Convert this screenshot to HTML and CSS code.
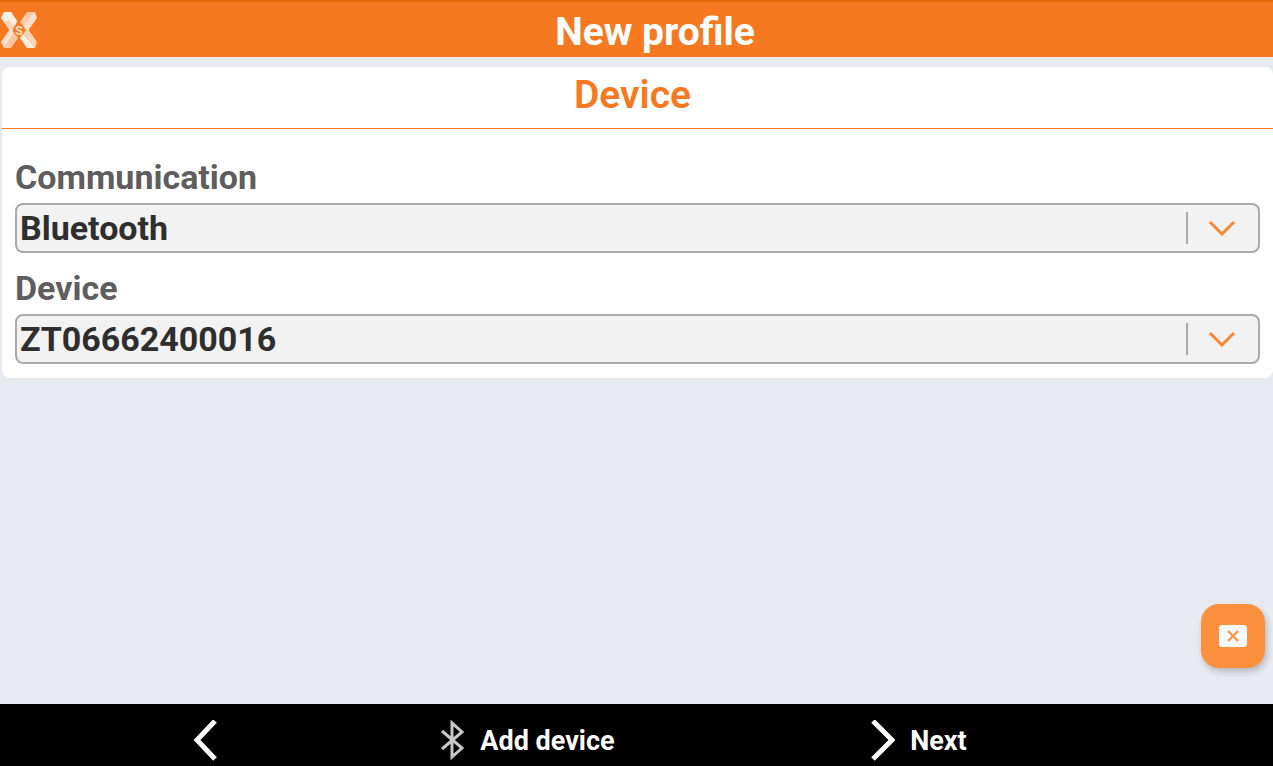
FILE: index.html
```html
<!DOCTYPE html>
<html lang="en">
<head>
<meta charset="utf-8">
<meta name="viewport" content="width=device-width, initial-scale=1">
<title>New profile</title>
<link rel="stylesheet" href="styles.css">
</head>
<body>
<header class="topbar">
  <svg class="logo" viewBox="0 0 36 36" aria-hidden="true">
    <path fill="#fcd5b9" d="M3 0h7l6 9-3 10H9L0 6z"/>
    <path fill="#fff0e3" d="M3 0h7l6 9-3 6z"/>
    <path fill="#fff0e3" d="M3 0L0 6l3 4 5-2z"/>
    <path fill="#fbc8a3" d="M26 0h8L23 16l-4-6z"/>
    <path fill="#fde0cb" d="M34 0l2 6-9 13-6-4z"/>
    <path fill="#fde0cb" d="M9 17l5 4L3 36l-3-6z"/>
    <path fill="#fbc8a3" d="M13 20l4 6-7 10H3z"/>
    <path fill="#fff0e3" d="M22 21l12 15h-8l-7-10z"/>
    <path fill="#fcd5b9" d="M27 17l9 13-2 6-12-15z"/>
    <circle cx="18" cy="18" r="6" fill="#f67921"/>
    <text class="logo-letter" x="18" y="23" text-anchor="middle">S</text>
  </svg>
  <h1 class="title">New profile</h1>
</header>
<main class="content">
  <section class="card">
    <h2 class="card-title">Device</h2>
    <form class="fields">
      <label class="label" for="communication">Communication</label>
      <div class="picker">
        <select class="select" id="communication"><option>Bluetooth</option></select>
        <span class="divider"></span>
        <svg class="chevron" viewBox="0 0 28 16" aria-hidden="true"><path d="M2 2l12 12L26 2"/></svg>
      </div>
      <label class="label" for="device">Device</label>
      <div class="picker">
        <select class="select" id="device"><option>ZT06662400016</option></select>
        <span class="divider"></span>
        <svg class="chevron" viewBox="0 0 28 16" aria-hidden="true"><path d="M2 2l12 12L26 2"/></svg>
      </div>
    </form>
  </section>
  <button class="float" type="button" aria-label="Close">
    <svg width="28" height="24" viewBox="0 0 28 24" aria-hidden="true">
      <rect y="1" width="28" height="22" rx="3" fill="#f7f9fb"/>
      <path d="M9 7l10 10M19 7L9 17" stroke="#fd903c" stroke-width="2" fill="none"/>
    </svg>
  </button>
</main>
<nav class="actions">
  <button class="action" type="button" aria-label="Back">
    <svg width="24" height="42" viewBox="0 0 24 42" aria-hidden="true"><path class="arrow" d="M22 1L4 20l18 19"/></svg>
  </button>
  <button class="action" type="button">
    <svg width="24" height="42" viewBox="0 0 24 42" aria-hidden="true"><path class="bluetooth" d="M1 11l20 17-10 9V3l10 9L1 29"/></svg>
    Add device
  </button>
  <button class="action" type="button">
    <svg width="24" height="42" viewBox="0 0 24 42" aria-hidden="true"><path class="arrow" d="M2 1l19 19L2 39"/></svg>
    Next
  </button>
</nav>
</body>
</html>
```
FILE: styles.css
```css
* { box-sizing: border-box; }
body {
  display: flex;
  flex-direction: column;
  min-height: 100vh;
  margin: 0;
  background: #e7eaef;
  font-family: Roboto, "Liberation Sans", sans-serif;
}
.topbar {
  display: flex;
  align-items: center;
  border-top: 2px solid #e9650a;
  background: #f67921;
  color: #fff;
}
.logo { width: 36px; height: 36px; margin-left: 1px; }
.logo-letter { font: 700 13px Roboto, sans-serif; fill: #fddcc4; }
.title {
  flex: 1;
  margin: 0;
  padding-top: 5px;
  font-size: 39px;
  font-weight: 700;
  line-height: 50px;
  text-align: center;
}
.content {
  display: flex;
  flex: 1;
  flex-direction: column;
  justify-content: space-between;
  padding: 10px 0 36px 2px;
}
.card { border-radius: 8px; background: #fff; }
.card-title {
  margin: 0;
  padding: 0 10px 5px 0;
  border-bottom: 1px solid #f67921;
  color: #f67921;
  font-size: 39px;
  font-weight: 600;
  line-height: 56px;
  text-align: center;
}
.fields { padding: 22px 13px 14px; }
.label {
  display: block;
  color: #5e5e5e;
  font-size: 34px;
  font-weight: 700;
  line-height: 52px;
}
.picker {
  display: flex;
  position: relative;
  align-items: center;
  margin-bottom: 9px;
}
.picker:last-child { margin-bottom: 0; }
.select {
  flex: 1;
  min-width: 0;
  height: 50px;
  padding: 0 80px 0 3px;
  border: 2px solid #aaa;
  border-radius: 8px;
  appearance: none;
  background: #f2f2f2;
  color: #2e2e2e;
  font: 700 34px Roboto, "Liberation Sans", sans-serif;
}
.divider {
  position: absolute;
  right: 72px;
  width: 2px;
  height: 32px;
  background: #aaa;
}
.chevron {
  position: absolute;
  right: 24px;
  width: 28px;
  height: 16px;
  fill: none;
  stroke: #fa8633;
  stroke-width: 3;
  pointer-events: none;
}
.float {
  display: grid;
  place-items: center;
  align-self: flex-end;
  width: 64px;
  height: 64px;
  margin-right: 8px;
  padding: 0;
  border: 0;
  border-radius: 18px;
  background: #fd903c;
  box-shadow: 2px 4px 6px #0003;
}
.actions {
  display: grid;
  grid-template-columns: 410fr 236fr 546fr 81fr;
  height: 62px;
  padding-top: 11px;
  background: #000;
}
.action {
  display: flex;
  align-items: center;
  justify-content: center;
  gap: 15px;
  padding: 0;
  border: 0;
  background: none;
  color: #fff;
  font: 700 27px Roboto, "Liberation Sans", sans-serif;
}
.arrow { fill: none; stroke: #fff; stroke-width: 5; }
.bluetooth { fill: none; stroke: #c8c8c8; stroke-width: 3; }
```
